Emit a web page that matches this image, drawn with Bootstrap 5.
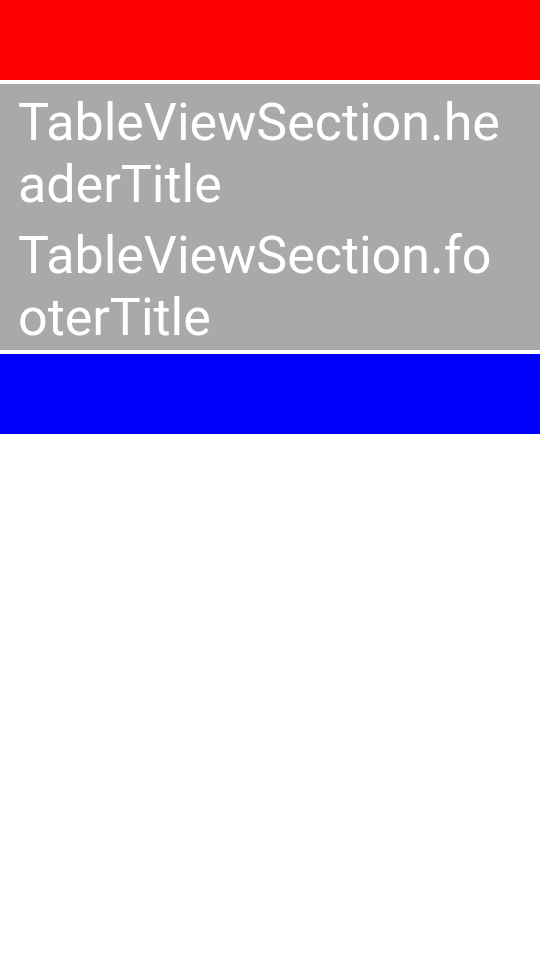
<!DOCTYPE html>
<html lang="en">
<head>
<meta charset="utf-8">
<meta name="viewport" content="width=device-width, initial-scale=1">
<title>Table view</title>
<link href="https://cdn.jsdelivr.net/npm/bootstrap@5.3.0/dist/css/bootstrap.min.css" rel="stylesheet">
<style>
body { font-family: Roboto, sans-serif; background: #fff; }
.band { height: 80px; }
.band-red { background: #f00; }
.band-blue { background: #00f; }
.section-block { background: #a9a9a9; color: #fff; padding: 8px 24px 1px 18px; gap: 9px; }
.section-title { font-size: 52px; line-height: 62px; font-weight: 400; word-break: break-all; }
</style>
</head>
<body>
<main class="d-flex flex-column gap-1">
  <header class="band band-red"></header>
  <section class="section-block d-flex flex-column">
    <h2 class="section-title mb-0">TableViewSection.headerTitle</h2>
    <p class="section-title mb-0">TableViewSection.footerTitle</p>
  </section>
  <footer class="band band-blue"></footer>
</main>
<script src="https://cdn.jsdelivr.net/npm/bootstrap@5.3.0/dist/js/bootstrap.bundle.min.js"></script>
</body>
</html>
